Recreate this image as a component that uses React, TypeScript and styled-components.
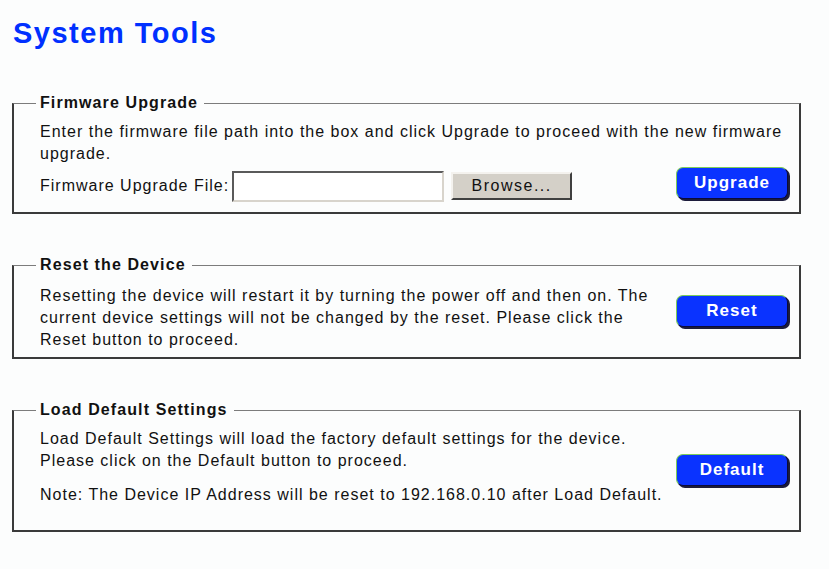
import React from "react";
import styled, { createGlobalStyle } from "styled-components";

const GlobalStyle = createGlobalStyle`
	html, body {
		margin: 0;
		padding: 0;
		background: #fcfdfd;
	}
	body {
		font-family: "Liberation Sans", Arial, sans-serif;
		color: #111;
	}
`;

const Page = styled.div`
	width: 829px;
	min-height: 569px;
	box-sizing: border-box;
	padding: 16px 28px 0 12px;
`;

const Title = styled.h1`
	margin: 0 0 44px 1px;
	font-size: 29px;
	line-height: 34px;
	font-weight: bold;
	letter-spacing: 1.5px;
	color: #0030ff;
`;

const Group = styled.fieldset<{ $padTop: number; $padBottom: number }>`
	margin: 0 0 42px 0;
	padding: ${(p) => p.$padTop}px 11px ${(p) => p.$padBottom}px 26px;
	border: 2px solid #3a3a3a;
	border-top: 1px solid #7c7c7c;
	min-width: 0;
`;

const Legend = styled.legend`
	margin-left: -4px;
	padding: 0 6px 0 4px;
	font-size: 16px;
	line-height: 18px;
	font-weight: bold;
	letter-spacing: 1.1px;
	color: #111;
`;

const Text = styled.p<{ $gapTop?: number }>`
	margin: ${(p) => p.$gapTop || 0}px 0 0 0;
	font-size: 16px;
	line-height: 22px;
	letter-spacing: 1px;
	white-space: nowrap;
`;

const Split = styled.div`
	display: flex;
	align-items: center;
	justify-content: space-between;
`;

const TextBlock = styled.div<{ $padBottom?: number }>`
	padding-bottom: ${(p) => p.$padBottom || 0}px;
`;

const FileRow = styled.div`
	display: flex;
	align-items: flex-start;
	margin-top: 2px;
`;

const Label = styled.span`
	align-self: center;
	font-size: 16px;
	letter-spacing: 1px;
	margin: 2px 3px 0 0;
	white-space: nowrap;
`;

const FileInput = styled.div`
	width: 208px;
	height: 27px;
	margin: 4px 7px 0 0;
	background: #fff;
	border: 2px solid;
	border-color: #5a5a5a #d8d4cc #d8d4cc #5a5a5a;
	flex-shrink: 0;
`;

const BrowseButton = styled.button`
	width: 121px;
	height: 28px;
	margin-top: 5px;
	flex-shrink: 0;
	background: #d4d0c8;
	border: 2px solid;
	border-color: #f4f2ee #404040 #404040 #f4f2ee;
	font-family: "Liberation Sans", Arial, sans-serif;
	font-size: 16px;
	letter-spacing: 1.5px;
	color: #111;
	padding: 0;
`;

const Spacer = styled.div`
	flex: 1;
`;

const ActionButton = styled.button<{ $lift?: number }>`
	width: 112px;
	height: 32px;
	flex-shrink: 0;
	margin-bottom: ${(p) => p.$lift || 0}px;
	border-radius: 7px;
	background: #0a33ff;
	border: 1px solid;
	border-color: #7ccc5a #0c0c3a #0c0c3a #7ccc5a;
	box-shadow: 2px 2px 0 #1c1c3c;
	color: #fff;
	font-family: "Liberation Sans", Arial, sans-serif;
	font-size: 17px;
	font-weight: bold;
	letter-spacing: 1px;
	padding: 0 0 1px 0;
`;

const App: React.FC = () => {
	return (
		<>
			<GlobalStyle />
			<Page>
				<Title>System Tools</Title>

				{/* Firmware */}
				<Group $padTop={9} $padBottom={10}>
					<Legend>Firmware Upgrade</Legend>
					<Text>
						Enter the firmware file path into the box and click Upgrade to proceed with the new firmware
						<br />
						upgrade.
					</Text>
					<FileRow>
						<Label>Firmware Upgrade File:</Label>
						<FileInput />
						<BrowseButton>Browse...</BrowseButton>
						<Spacer />
						<ActionButton>Upgrade</ActionButton>
					</FileRow>
				</Group>

				{/* Reset */}
				<Group $padTop={11} $padBottom={6}>
					<Legend>Reset the Device</Legend>
					<Split>
						<TextBlock>
							<Text>
								Resetting the device will restart it by turning the power off and then on. The
								<br />
								current device settings will not be changed by the reset. Please click the
								<br />
								Reset button to proceed.
							</Text>
						</TextBlock>
						<ActionButton $lift={14}>Reset</ActionButton>
					</Split>
				</Group>

				{/* Defaults */}
				<Group $padTop={9} $padBottom={12}>
					<Legend>Load Default Settings</Legend>
					<Split>
						<TextBlock $padBottom={12}>
							<Text>
								Load Default Settings will load the factory default settings for the device.
								<br />
								Please click on the Default button to proceed.
							</Text>
							<Text $gapTop={12}>
								Note: The Device IP Address will be reset to 192.168.0.10 after Load Default.
							</Text>
						</TextBlock>
						<ActionButton $lift={6}>Default</ActionButton>
					</Split>
				</Group>
			</Page>
		</>
	);
};

export default App;
